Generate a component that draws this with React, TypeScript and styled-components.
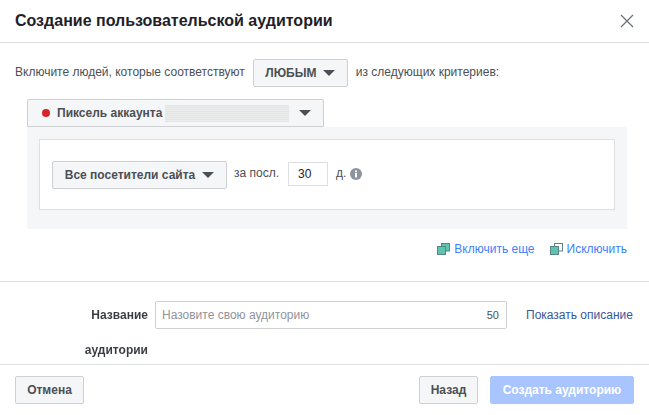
import { FC } from 'react';
import styled, { createGlobalStyle } from 'styled-components';

const GlobalStyle = createGlobalStyle`
  html, body {
    margin: 0;
    padding: 0;
    background: #fff;
    overflow: hidden;
  }
  body {
    font-family: "Liberation Sans", Arial, sans-serif;
    font-size: 12px;
    color: #4b4f56;
  }
`;

const Dialog = styled.div`
  width: 649px;
  height: 415px;
  display: flex;
  flex-direction: column;
  overflow: hidden;
`;

const Header = styled.header`
  height: 42px;
  display: flex;
  align-items: center;
  justify-content: space-between;
  padding: 0 15px;
  border-bottom: 1px solid #dddfe2;
`;

const Title = styled.h1`
  margin: 0;
  font-size: 16px;
  font-weight: 700;
  color: #1d2129;
`;

const CloseIcon = styled.svg`
  width: 14px;
  height: 14px;
  stroke: #6d7178;
  stroke-width: 1.3;
  fill: none;
`;

const Body = styled.div`
  padding: 16px 15px 0;
`;

const CriteriaRow = styled.div`
  display: flex;
  align-items: center;
  gap: 8px;
  height: 28px;
`;

const CriteriaText = styled.span`
  margin-top: -2px;
`;

const Button = styled.button<{ $width?: number }>`
  display: inline-flex;
  align-items: center;
  justify-content: center;
  flex: none;
  box-sizing: border-box;
  height: 28px;
  width: ${p => (p.$width ? `${p.$width}px` : 'auto')};
  padding: 0 12px;
  border: 1px solid #ced0d4;
  border-radius: 2px;
  background: #f5f6f7;
  color: #4b4f56;
  font-family: inherit;
  font-size: 12px;
  font-weight: 700;
  white-space: nowrap;
`;

const Caret = styled.span`
  flex: none;
  width: 0;
  height: 0;
  margin-left: 7px;
  border-left: 6px solid transparent;
  border-right: 6px solid transparent;
  border-top: 6px solid #4b4f56;
`;

const Criteria = styled.div`
  margin: 12px 7px 0 12px;
`;

const PixelButton = styled(Button)`
  justify-content: flex-start;
  border-bottom-left-radius: 0;
  border-bottom-right-radius: 0;
`;

const RedDot = styled.span`
  flex: none;
  width: 8px;
  height: 8px;
  margin: 0 7px 0 2px;
  border-radius: 50%;
  background: #d9222a;
`;

const Blurred = styled.span`
  flex: none;
  width: 124px;
  height: 17px;
  margin-left: 3px;
  background: repeating-linear-gradient(180deg, #e3e4e6 0 1px, #eceded 1px 2px);
  filter: blur(0.6px);
`;

const PixelCaret = styled(Caret)`
  margin-left: auto;
`;

const Panel = styled.div`
  background: #f5f6f7;
  padding: 12px;
  height: 102px;
  box-sizing: border-box;
`;

const RuleBox = styled.div`
  box-sizing: border-box;
  height: 71px;
  display: flex;
  align-items: center;
  padding: 0 12px;
  border: 1px solid #dddfe2;
  background: #fff;
`;

const Muted = styled.span`
  margin-top: -3px;
`;

const WindowLabel = styled(Muted)`
  margin-left: 7px;
`;

const DaysInput = styled.input`
  box-sizing: border-box;
  width: 40px;
  height: 24px;
  margin: -2px 8px 0 9px;
  padding: 0 9px;
  border: 1px solid #dddfe2;
  background: #fff;
  color: #1d2129;
  font-family: inherit;
  font-size: 12px;
`;

const InfoIcon = styled.svg`
  width: 12px;
  height: 12px;
  margin: -2px 0 0 4px;
`;

const Links = styled.div`
  display: flex;
  justify-content: flex-end;
  gap: 15px;
  margin: 12px 7px 0 0;
  height: 15px;
`;

const ActionLink = styled.a`
  display: inline-flex;
  align-items: center;
  gap: 4px;
  color: #4080ff;
`;

const Divider = styled.hr`
  margin: 25px 0 0;
  height: 1px;
  border: 0;
  background: #dddfe2;
`;

const NameRow = styled.div`
  display: grid;
  grid-template-columns: 133px 352px auto;
  column-gap: 7px;
  align-items: start;
  padding: 19px 15px 0 15px;
  height: 63px;
`;

const NameLabel = styled.label`
  text-align: right;
  font-weight: 700;
  color: #1d2129;
  opacity: 0.88;
  line-height: 35px;
  margin-top: -3px;
`;

const NameField = styled.div`
  box-sizing: border-box;
  height: 28px;
  display: flex;
  align-items: center;
  justify-content: space-between;
  padding: 0 7px 0 6px;
  border: 1px solid #ced0d4;
  border-radius: 2px;
  color: #90949c;
`;

const Counter = styled.span`
  color: #4b4f56;
  font-size: 11px;
`;

const DescLink = styled.a`
  line-height: 28px;
  margin-left: 12px;
  color: #365899;
  white-space: nowrap;
`;

const Footer = styled.footer`
  box-sizing: border-box;
  height: 51px;
  display: flex;
  align-items: center;
  gap: 12px;
  padding: 0 15px;
  border-top: 1px solid #dddfe2;
`;

const Spacer = styled.div`
  flex: 1;
`;

const PrimaryButton = styled(Button)`
  border-color: #a9c5ff;
  background: #a9c5ff;
  color: #fff;
`;

const StackIcon: FC<{ front: string }> = ({ front }) => (
  <svg width="13" height="12" viewBox="0 0 13 12">
    <rect x="4.5" y="0.5" width="8" height="7.5" fill={front} stroke="#5b8489" />
    <rect x="0.5" y="3.5" width="8" height="8" fill="#5ec4ae" stroke="#5b8489" />
  </svg>
);

const App: FC = () => (
  <Dialog>
    <GlobalStyle />
    <Header>
      <Title>Создание пользовательской аудитории</Title>
      <CloseIcon viewBox="0 0 14 14">
        <path d="M1 1l12 12M13 1L1 13" />
      </CloseIcon>
    </Header>
    <Body>
      <CriteriaRow>
        <CriteriaText>Включите людей, которые соответствуют</CriteriaText>
        <Button $width={95}>
          ЛЮБЫМ
          <Caret />
        </Button>
        <CriteriaText>из следующих критериев:</CriteriaText>
      </CriteriaRow>
      <Criteria>
        <PixelButton $width={297}>
          <RedDot />
          Пиксель аккаунта
          <Blurred />
          <PixelCaret />
        </PixelButton>
        <Panel>
          <RuleBox>
            <Button $width={175}>
              Все посетители сайта
              <Caret />
            </Button>
            <WindowLabel>за посл.</WindowLabel>
            <DaysInput defaultValue="30" />
            <Muted>д.</Muted>
            <InfoIcon viewBox="0 0 12 12">
              <circle cx="6" cy="6" r="6" fill="#8d949e" />
              <rect x="5" y="5" width="2" height="4.5" fill="#fff" />
              <circle cx="6" cy="3.3" r="1.1" fill="#fff" />
            </InfoIcon>
          </RuleBox>
        </Panel>
      </Criteria>
      <Links>
        <ActionLink>
          <StackIcon front="#5ec4ae" />
          Включить еще
        </ActionLink>
        <ActionLink>
          <StackIcon front="#fff" />
          Исключить
        </ActionLink>
      </Links>
    </Body>
    <Divider />
    <NameRow>
      <NameLabel>
        Название
        <br />
        аудитории
      </NameLabel>
      <NameField>
        <span>Назовите свою аудиторию</span>
        <Counter>50</Counter>
      </NameField>
      <DescLink>Показать описание</DescLink>
    </NameRow>
    <Footer>
      <Button $width={69}>Отмена</Button>
      <Spacer />
      <Button $width={59}>Назад</Button>
      <PrimaryButton $width={144}>Создать аудиторию</PrimaryButton>
    </Footer>
  </Dialog>
);

export default App;
